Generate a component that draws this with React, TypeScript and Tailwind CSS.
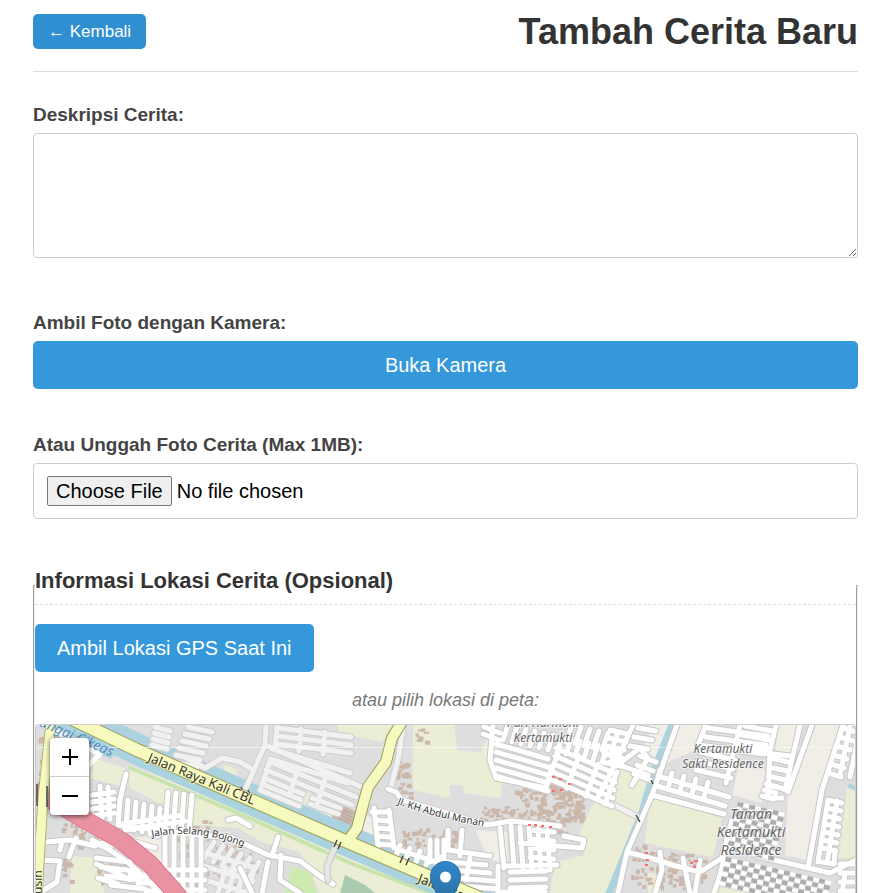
import { useId } from "react";

type Hatch = [number, number, number, number, number, number, number];

// Parallel strokes: first segment, count, then the shift between neighbours.
const hatch = ([x1, y1, x2, y2, n, dx, dy]: Hatch) =>
  Array.from({ length: n }, (_, i) => `M${x1 + i * dx} ${y1 + i * dy}L${x2 + i * dx} ${y2 + i * dy}`).join("");

const farmland = [
  "95,759 125,768 120,786 90,778",
  "128,765 240,806 290,828 345,850 338,872 300,852 262,842 238,828 190,824 165,806 130,788",
  "72,856 95,858 100,870 104,893 70,893",
  "337,725 393,725 382,742 340,733",
  "413,725 455,725 457,750 480,752 488,738 493,775 503,782 500,798 465,793 462,785 450,785 450,798 413,790",
  "612,778 622,766 650,775 640,820 610,893 550,893 555,862 585,855 580,832 595,800",
  "650,797 722,818 713,857 645,843",
  "847,788 856,790 856,858 838,858",
  "648,873 662,875 660,893 648,893",
  "720,887 750,893 718,893",
  "345,846 420,878 465,893 320,893 300,852",
  "225,765 238,770 232,786 222,782",
  "300,790 345,806 330,828 290,812",
];

const gaps = ["425,725 455,725 457,750 481,752 482,742 470,725"];

const plain = [
  "650,725 703,725 697,750 672,760 654,772",
  "778,725 800,725 790,755 776,750",
  "738,768 765,770 762,803 732,795",
  "810,725 842,725 823,782 808,860 785,855 788,790",
  "640,752 655,725 670,725 658,758",
  "475,830 507,832 508,866 488,858",
  "105,840 163,835 163,872 130,850",
  "360,815 374,818 380,848 410,862 360,845",
];

const softRoads = [
  "M266 725L265 745L245 790M265 745L364 788M185 757L205 768L222 758L240 762L250 768",
  "M403 728L398 760L390 790M600 798L640 818",
  hatch([188, 727, 212, 732, 6, -3, 7]),
  hatch([155, 727, 170, 731, 4, -1, 6]),
  hatch([277, 728, 351, 737, 3, 0, 8]),
  hatch([272, 749, 350, 773, 2, -2, 10]),
  hatch([270, 762, 356, 797, 2, -4, 8]),
  hatch([264, 778, 303, 794, 3, -2, 6]),
  hatch([277, 726, 275, 748, 3, 24, 3]),
  hatch([270, 760, 262, 786, 3, 28, 8]),
  hatch([214, 842, 204, 858, 6, 9, 4]),
  hatch([202, 852, 255, 868, 3, -2, 13]),
  hatch([312, 798, 340, 808, 2, -2, 6]),
  hatch([226, 868, 218, 893, 4, 9, 2]),
].join("");

const streets = [
  "M388 789L396 792L402 800L450 814L487 825L512 821L560 826",
  "M45 842L70 840L95 846L105 842M76 838L69 857M62 842L60 850M42 860L60 861L57 882L44 890",
  "M92 840L110 850L130 864L152 885L165 893M94 845L118 845M115 836L155 848",
  "M126 774L120 800L118 825L180 833L232 838L268 855L300 861L320 876L333 884",
  "M278 837L272 856M281 855L280 880L300 893M268 862L262 893M240 868L252 893",
  "M228 820L236 818L250 826M96 864L115 872L130 880M98 878L118 884",
  "M372 812L390 812M374 808L378 846M389 810L394 848L436 862L442 870",
  "M448 830L448 850L490 856M462 830L460 856M470 858L466 880M500 828L504 868",
  "M493 725L490 760L496 778L546 788M552 766L546 788M633 725L612 770L598 797",
  "M610 762L648 775M616 766L640 748L648 758L632 785",
  "M564 836L584 840L582 848L520 843M505 866L557 865M500 892L545 892M498 866L498 893",
  "M677 725L652 795L627 852L618 893M652 795L724 814M627 852L650 858L676 866L700 872L722 858L732 820",
  "M740 725L726 783M706 725L698 745L790 756M776 726L770 750L768 795M800 725L785 790M812 725L788 792",
  "M768 798L782 798M724 858L720 875L714 893M757 856L830 873L856 860M843 725L822 790L808 868",
  "M822 862L834 864L835 850M845 875L842 893M660 852L662 870L655 893M683 858L690 893M700 860L695 893",
  hatch([92, 795, 114, 792, 4, 0, 7]),
  hatch([100, 786, 102, 818, 2, 8, 1]),
  hatch([128, 800, 126, 828, 5, 8, 2]),
  hatch([168, 792, 165, 830, 4, 8, 1]),
  hatch([122, 824, 182, 815, 2, 3, 6]),
  hatch([165, 833, 165, 890, 5, 9, 1]),
  hatch([96, 858, 130, 862, 4, 5, 9]),
  hatch([160, 870, 205, 870, 3, 0, 10]),
  hatch([130, 875, 150, 875, 3, 8, 8]),
  hatch([376, 820, 388, 821, 4, 1, 8]),
  hatch([400, 845, 396, 856, 5, 10, 3]),
  hatch([430, 840, 430, 862, 3, 7, 0]),
  hatch([448, 862, 486, 865, 4, 4, 8]),
  hatch([484, 727, 500, 733, 2, -1, 7]),
  hatch([496, 744, 548, 759, 5, 0, 8]),
  hatch([508, 725, 503, 740, 13, 9, 2]),
  hatch([572, 725, 566, 742, 6, 9, 2]),
  hatch([556, 748, 616, 774, 5, -1, 8]),
  hatch([560, 748, 548, 780, 4, 19, 8]),
  hatch([610, 730, 628, 734, 5, -2, 8]),
  hatch([638, 728, 656, 731, 3, -4, 9]),
  hatch([640, 756, 656, 762, 3, -3, 9]),
  hatch([511, 826, 514, 866, 5, 9, 1]),
  hatch([510, 872, 546, 871, 3, 0, 8]),
  hatch([530, 830, 554, 832, 4, 0, 9]),
  hatch([708, 728, 768, 736, 3, -2, 9]),
  hatch([660, 770, 656, 785, 5, 12, 3]),
  hatch([657, 786, 725, 806, 2, 4, -9]),
  hatch([735, 760, 700, 752, 3, -2, 9]),
  hatch([745, 726, 772, 731, 3, -3, 9]),
  hatch([770, 758, 788, 762, 4, -1, 9]),
  hatch([766, 784, 778, 787, 3, -2, 6]),
  hatch([843, 728, 856, 732, 6, -3, 9]),
  hatch([850, 726, 840, 775, 2, 10, 2]),
  hatch([828, 800, 842, 803, 7, -1, 8]),
  hatch([828, 800, 818, 862, 2, 9, 1]),
  hatch([840, 864, 856, 864, 4, 0, 9]),
].join("");

const noise = (n: number) => {
  const s = Math.sin(n * 127.1) * 43758.5453;
  return s - Math.floor(s);
};

// Small building footprints scattered over a block.
function buildings(x: number, y: number, w: number, h: number, n: number) {
  return Array.from({ length: n }, (_, i) => {
    const k = x * 3 + y + i * 5;
    return {
      x: x + noise(k) * w,
      y: y + noise(k + 1) * h,
      w: 2 + noise(k + 2) * 4,
      h: 2 + noise(k + 3) * 3,
    };
  });
}

const houses = [
  ...buildings(38, 735, 8, 50, 14),
  ...buildings(60, 812, 34, 34, 34),
  ...buildings(56, 850, 14, 30, 12),
  ...buildings(170, 815, 50, 70, 44),
  ...buildings(95, 848, 50, 40, 24),
  ...buildings(205, 840, 50, 48, 34),
  ...buildings(393, 760, 16, 40, 30),
  ...buildings(414, 728, 12, 14, 8),
  ...buildings(402, 826, 40, 20, 30),
  ...buildings(515, 788, 68, 32, 130),
  ...buildings(545, 770, 24, 18, 34),
  ...buildings(480, 806, 32, 14, 34),
  ...buildings(442, 830, 14, 14, 14),
  ...buildings(545, 820, 20, 12, 12),
  ...buildings(630, 842, 20, 45, 26),
  ...buildings(655, 852, 48, 36, 60),
];

const redDots = [
  [552, 776], [559, 778], [568, 783], [560, 789], [552, 790], [528, 824], [534, 824], [541, 825], [549, 826],
  [645, 852], [646, 859], [645, 864], [690, 862], [693, 866], [695, 860],
];

function Checkers({ x, y, cols, rows }: { x: number; y: number; cols: number; rows: number }) {
  return (
    <g transform={`translate(${x} ${y}) rotate(13)`}>
      <rect width={cols * 6} height={rows * 5} fill="#d8d7d7" />
      {Array.from({ length: cols * rows }, (_, i) => {
        const c = i % cols;
        const r = Math.floor(i / cols);
        return <rect key={i} x={c * 6} y={r * 5} width={6} height={4} fill={(c + r) % 2 ? "#ffffff" : "#acacac"} />;
      })}
    </g>
  );
}

const canal = "M68 716L137 749L230 790L343 839L430 876L480 897";
const kaliRoad = "M68 717L137 750L230 791L343 840L430 877L480 898";
const northRoad = "M403 720L392 738L386 762L368 787L363 805L357 828L348 841";
const tollRoad = "M34 790L53 801L87 821L122 841L150 864L180 898";
const westRoad = "M51 722L43 798L37 896";

function StreetMap() {
  const id = useId();
  return (
    <svg
      className="absolute inset-0 h-full w-full"
      viewBox="36 725 819 168"
      preserveAspectRatio="xMidYMin slice"
      role="img"
      aria-label="Peta lokasi"
      fontFamily='"Noto Sans", sans-serif'
    >
      <defs>
        <linearGradient id={`${id}pin`} x1="0" y1="0" x2="0" y2="1">
          <stop offset="0" stopColor="#2e86cd" />
          <stop offset="1" stopColor="#2e6c97" />
        </linearGradient>
        <path id={`${id}selang`} d="M152 837Q202 827 250 850" />
        <path id={`${id}manan`} d="M397 804Q440 820 500 829" />
      </defs>
      <rect x="0" y="700" width="900" height="500" fill="#dfdedf" />
      {plain.map((p) => (
        <polygon key={p} points={p} fill="#f1eee8" />
      ))}
      {farmland.map((p) => (
        <polygon key={p} points={p} fill="#ebeed5" />
      ))}
      {gaps.map((p) => (
        <polygon key={p} points={p} fill="#dfdedf" />
      ))}
      <polygon points="292,867 315,873 312,882 318,893 285,893" fill="#cdebb0" />
      <path d="M345 875L365 885L375 893H340Z" fill="#aacbaf" />
      <path d="M128 767L240 814L350 863L430 893" fill="none" stroke="#c8e3ad" strokeWidth="4" />
      <polygon points="337,803 357,812 350,831 330,822" fill="#c9b8b0" />
      <path d={hatch([335, 806, 353, 814, 5, -1, 3])} stroke="#b9a59c" strokeWidth="1" />
      {houses.map((b, i) => (
        <rect key={i} x={b.x} y={b.y} width={b.w} height={b.h} fill="#cbb8ab" />
      ))}

      <g fill="none" strokeLinecap="round" strokeLinejoin="round">
        <path d="M673 722L656 765L641 815L608 896" stroke="#aad3df" strokeWidth="7" />
        <path d="M850 786L856 789" stroke="#aad3df" strokeWidth="4" />
        <path d={canal} stroke="#aad3df" strokeWidth="31" />
        <path d="M36 722L80 745L110 755" stroke="#aad3df" strokeWidth="6" />
        <path d={softRoads} stroke="#cfcece" strokeWidth="7" />
        <path d={softRoads} stroke="#f1f1f1" strokeWidth="5" />
        <path d={streets} stroke="#c8c7c6" strokeWidth="7" />
        <path d={streets} stroke="#ffffff" strokeWidth="5" />
        <path d="M337 843L327 866L328 880" stroke="#c8c8c8" strokeWidth="7" />
        <path d="M337 843L327 866L328 880" stroke="#e6e6e6" strokeWidth="5" />
        <path d="M36 722L100 754L90 764" stroke="#ffffff" strokeWidth="5" />
      </g>
      <Checkers x={738} y={802} cols={8} rows={10} />
      <Checkers x={726} y={857} cols={18} rows={6} />
      {redDots.map(([x, y]) => (
        <rect key={`${x}-${y}`} x={x} y={y} width="3" height="2" fill="#ff6b6b" />
      ))}

      <g fill="none" strokeLinejoin="round">
        <path d={tollRoad} stroke="#dc5578" strokeWidth="18" />
        <path d={tollRoad} stroke="#e892a2" strokeWidth="17" />
        <path d={westRoad} stroke="#b0b270" strokeWidth="11" />
        <path d={northRoad} stroke="#9b9e5a" strokeWidth="12" />
        <path d={kaliRoad} stroke="#9b9e5a" strokeWidth="14" />
        <path d={westRoad} stroke="#f7fabf" strokeWidth="9" />
        <path d={northRoad} stroke="#f7fabf" strokeWidth="10" />
        <path d={kaliRoad} stroke="#f7fabf" strokeWidth="12" />
        <path
          d="M37 784V806M47 786V807M241 787L243 792M248 790L250 795M337 840L334 847M341 842L338 849M403 856L400 863M409 858L406 865M651 780L653 784M636 815L640 822"
          stroke="#4a4a4a"
          strokeWidth="1.5"
        />
      </g>
      <path d="M36 747.5H856" stroke="#ffffff" strokeOpacity=".55" />

      <g fill="#333333" stroke="#ffffff" strokeOpacity=".75" strokeWidth="2" paintOrder="stroke" strokeLinejoin="round">
        <text transform="translate(147 761) rotate(22.5)" fontSize="13" stroke="#f7fabf">Jalan Raya Kali CBL</text>
        <text transform="translate(417 882) rotate(22)" fontSize="13" stroke="#f7fabf">Jalan Raya Kali CBL</text>
        <text transform="translate(42 894) rotate(-90)" fontSize="12" stroke="#f7fabf">usin</text>
        <text fontSize="10"><textPath href={`#${id}selang`}>Jalan Selang Bojong</textPath></text>
        <text fontSize="10"><textPath href={`#${id}manan`}>Jl. KH Abdul Manan</textPath></text>
      </g>
      <text transform="translate(32 723) rotate(23)" fontSize="14" fontStyle="italic" fill="#5b8fc4">Sungai Cikeas</text>
      <g fill="#666666" stroke="#ffffff" strokeOpacity=".6" strokeWidth="2" paintOrder="stroke" fontStyle="italic" textAnchor="middle">
        <text x="543" y="727" fontSize="12">Puri Harmoni</text>
        <text x="543" y="742" fontSize="12">Kertamukti</text>
        <text x="723" y="753" fontSize="12">Kertamukti</text>
        <text x="723" y="768" fontSize="12">Sakti Residence</text>
        <text x="751" y="819" fontSize="14">Taman</text>
        <text x="751" y="837" fontSize="14">Kertamukti</text>
        <text x="751" y="855" fontSize="14">Residence</text>
      </g>
      <path
        d="M445.500 861.500C437 861.500 430.500 868.200 430.500 876.500C430.500 886 438 893 445.500 912C453 893 460.500 886 460.500 876.500C460.500 868.200 454 861.500 445.500 861.500Z"
        fill={`url(#${id}pin)`}
        stroke="#2e6f9f"
      />
      <circle cx="445.500" cy="877" r="5.500" fill="#ffffff" />
    </svg>
  );
}

const label = "mb-1 block text-[19px] leading-7 font-bold text-[#444444]";
const primary = "rounded-[5px] bg-[#3498db] text-xl leading-7 text-white";

export default function App() {
  return (
    <main className="flex h-screen flex-col overflow-hidden bg-white pr-6 pl-[33px] font-['Liberation_Sans',Arial,sans-serif] text-[#333333]">
      <header className="flex shrink-0 items-start justify-between border-b border-[#dddddd] pt-3.5 pb-[22px]">
        <button type="button" className="rounded-[5px] bg-[#308fd0] px-[15px] py-1.5 text-[17px] leading-[23px] text-white">
          ← Kembali
        </button>
        <h1 className="text-4xl leading-[35px] font-bold">Tambah Cerita Baru</h1>
      </header>

      <form className="flex min-h-0 flex-1 flex-col pt-[29px]">
        <div className="mb-[51px] flex flex-col">
          <label htmlFor="description" className={label}>Deskripsi Cerita:</label>
          <textarea id="description" className="h-[125px] w-full resize-y rounded-[4px] border border-[#cccccc] p-3 text-xl" />
        </div>

        <div className="mb-[42px]">
          <label htmlFor="camera" className={label}>Ambil Foto dengan Kamera:</label>
          <button id="camera" type="button" className={`${primary} w-full py-2.5`}>Buka Kamera</button>
        </div>

        <div className="mb-12">
          <label htmlFor="photo" className={label}>Atau Unggah Foto Cerita (Max 1MB):</label>
          <input
            id="photo"
            type="file"
            accept="image/*"
            className="block h-14 w-full rounded-[4px] border border-[#cccccc] px-[13px] py-3 text-xl leading-7 text-black file:mr-[5px] file:rounded-[2px] file:border file:border-solid file:border-[#767676] file:bg-[#efefef] file:px-2 file:py-0"
          />
        </div>

        <fieldset className="flex min-h-0 flex-1 flex-col border-2 border-b-0 border-[#f0f0f0] [border-style:groove]">
          <legend className="w-full border-b border-dashed border-[#dddddd] pb-[9px] text-[22px] leading-7 font-bold">
            Informasi Lokasi Cerita (Opsional)
          </legend>
          <button type="button" className={`${primary} mt-[19px] self-start px-[22px] py-2.5`}>
            Ambil Lokasi GPS Saat Ini
          </button>
          <p className="mt-3.5 mb-2.5 text-center text-lg leading-7 text-[#777777] italic">atau pilih lokasi di peta:</p>
          <div className="relative min-h-40 flex-1 overflow-hidden rounded-t-[4px] border border-b-0 border-[#cccccc]">
            <StreetMap />
            <div className="absolute top-[13px] left-3.5 flex w-[39px] flex-col overflow-hidden rounded-[4px] bg-white shadow-[0_1px_5px_rgba(0,0,0,0.65)]">
              <button type="button" aria-label="Perbesar" className="flex h-[39px] items-center justify-center border-b border-[#cccccc]">
                <svg viewBox="0 0 18 18" className="size-[18px]"><path d="M9 1V17M1 9H17" stroke="#000000" strokeWidth="2" /></svg>
              </button>
              <button type="button" aria-label="Perkecil" className="flex h-[38px] items-center justify-center">
                <svg viewBox="0 0 18 18" className="size-[18px]"><path d="M1 9H17" stroke="#000000" strokeWidth="2" /></svg>
              </button>
            </div>
          </div>
        </fieldset>
      </form>
    </main>
  );
}
